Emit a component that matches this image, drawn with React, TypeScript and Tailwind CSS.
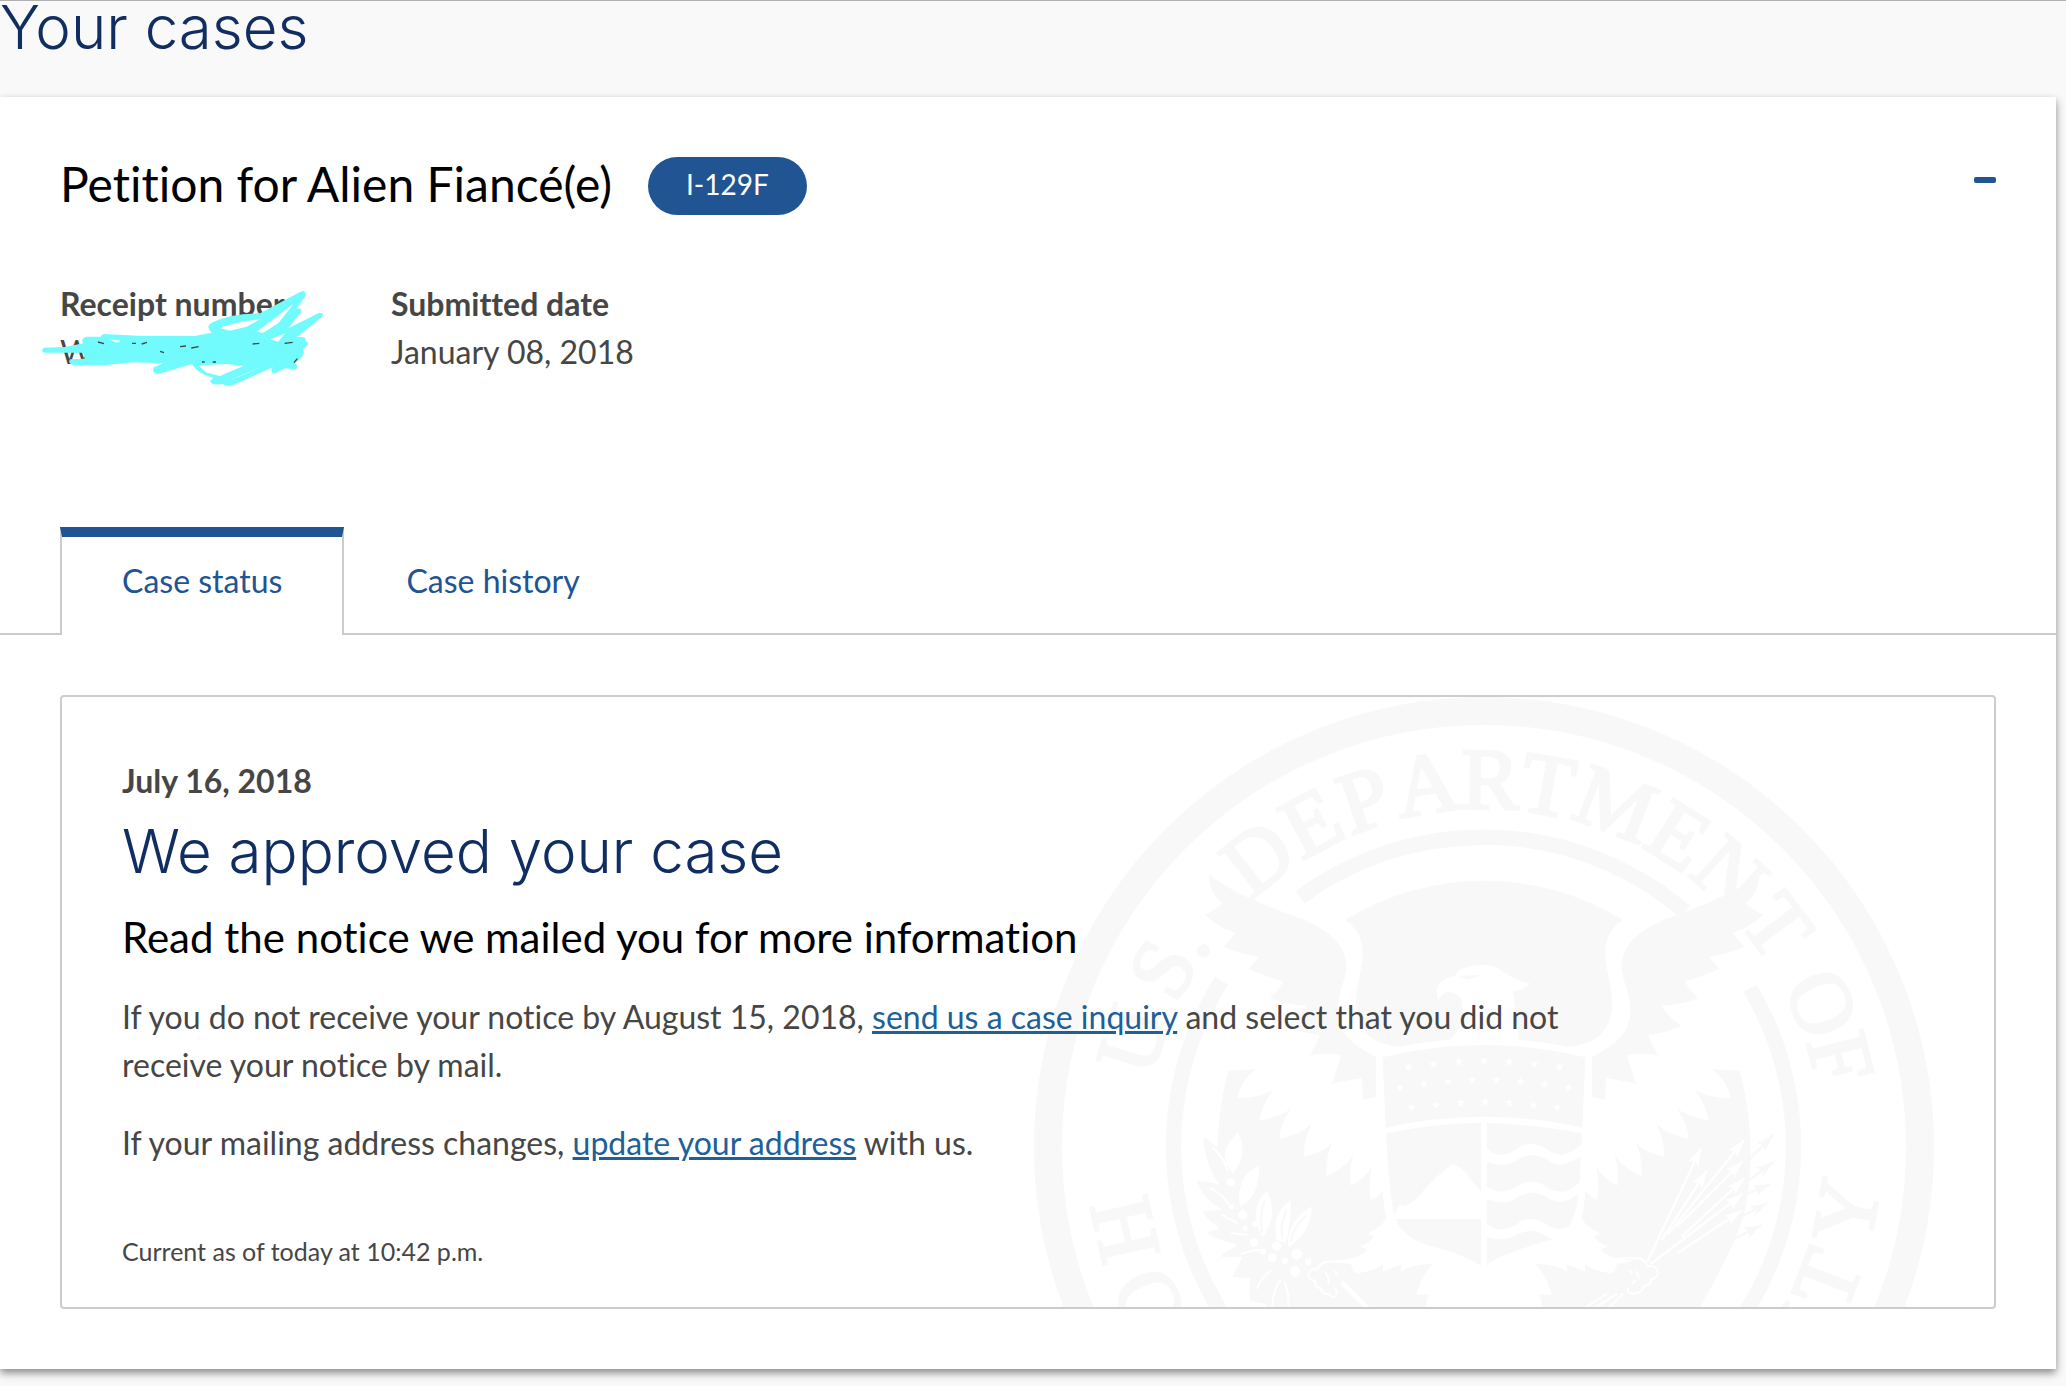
import { useState } from "react";

const SEAL = "#f8f8f8";

// glyph, degrees clockwise from the top of the seal
const topLetters: [string, number][] = [
  ["U", -73],
  ["S", -61],
  [".", -55],
  ["D", -38],
  ["E", -28],
  ["P", -19],
  ["A", -9],
  ["R", 1],
  ["T", 10],
  ["M", 21],
  ["E", 32],
  ["N", 42],
  ["T", 53],
  ["O", 67],
  ["F", 76],
];

// glyph, degrees clockwise from the bottom of the seal
const bottomLetters: [string, number][] = [
  ["H", 77],
  ["O", 65],
  ["M", 52],
  ["I", -61],
  ["T", -69],
  ["Y", -80],
];

const stars: [number, number][] = [
  [1165, 1130], [1240, 1122], [1316, 1115], [1392, 1112], [1467, 1115], [1543, 1122], [1618, 1130],
  [1140, 1192], [1212, 1182], [1284, 1174], [1357, 1170], [1430, 1170], [1502, 1174], [1574, 1182], [1645, 1192],
  [1175, 1252], [1248, 1245], [1322, 1238], [1395, 1235], [1468, 1238], [1540, 1245], [1612, 1252],
];

const berries: [number, number, number][] = [
  [632, 1477, 12], [635, 1550, 8], [668, 1575, 14], [676, 1615, 8], [705, 1602, 8],
  [702, 1657, 13], [730, 1685, 9], [757, 1703, 13], [770, 1668, 14], [795, 1712, 9],
  [830, 1693, 16], [865, 1715, 10], [825, 1744, 16],
];

// tail x, tail y, tip x, tip y
const lightArrows: [number, number, number, number][] = [
  [1882, 1715, 2043, 1375],
  [1925, 1650, 2061, 1442],
  [1945, 1632, 2172, 1350],
  [1970, 1610, 2168, 1414],
  [1985, 1640, 2172, 1466],
  [1892, 1722, 2168, 1512],
  [1972, 1690, 2164, 1562],
];

const darkArrows: [number, number, number, number][] = [
  [2188, 1408, 2260, 1335],
  [2186, 1472, 2260, 1415],
  [2180, 1512, 2252, 1482],
  [2160, 1582, 2242, 1540],
  [2145, 1645, 2225, 1606],
];

const Arrow = ({ points, color }: { points: [number, number, number, number]; color: string }) => {
  const [x1, y1, x2, y2] = points;
  const angle = (Math.atan2(y2 - y1, x2 - x1) * 180) / Math.PI;
  return (
    <g>
      <line x1={x1} y1={y1} x2={x2} y2={y2} stroke={color} strokeWidth={7} />
      <path
        d="M0 0 L-52 -17 L-42 0 L-52 17 Z"
        fill={color}
        transform={`translate(${x2} ${y2}) rotate(${angle})`}
      />
    </g>
  );
};

const UpperWing = () => (
  <path d="M568 553 C620 600 720 640 800 670 C900 705 975 745 980 830 C978 870 955 900 953 960 C953 1020 985 1060 1068 1100 L1068 1220 L1030 1230 L1025 1165 Q985 1170 935 1182 Q955 1130 962 1095 Q915 1088 870 1095 Q890 1065 900 1035 Q850 1030 799 1008 Q835 985 860 947 Q790 945 750 925 Q775 900 790 875 Q740 860 685 837 Q705 815 715 800 Q650 790 610 770 Q635 745 645 728 Q590 710 555 675 Q590 655 608 640 Q565 610 568 553Z" />
);

const LowerWing = () => (
  <path d="M625 1142 L710 1138 Q660 1170 653 1225 Q720 1225 762 1198 Q725 1240 718 1292 Q780 1280 815 1255 Q780 1300 778 1346 Q840 1335 875 1302 Q850 1350 852 1400 Q905 1390 935 1360 Q915 1410 920 1458 Q975 1435 1000 1395 Q985 1440 992 1487 Q1035 1465 1055 1430 Q1045 1480 1052 1530 Q1075 1520 1088 1500 Q1090 1550 1100 1585 Q1080 1615 1045 1630 L1062 1640 Q1040 1665 1020 1668 L1042 1680 Q1010 1710 940 1712 L992 1722 Q1000 1745 1010 1750 Q1060 1745 1090 1722 L1088 1745 L1145 1722 L1142 1745 Q1180 1720 1238 1722 Q1200 1760 1190 1815 L1225 1812 L1215 1860 L749 1860 Q634 1660 609 1560 C580 1420 590 1280 625 1142Z" />
);

const Seal = ({ className }: { className?: string }) => (
  <svg className={className} viewBox="42 21 2700 2700" fill={SEAL} aria-hidden="true">
    <circle cx={1392} cy={1371} r={1308} fill="none" stroke={SEAL} strokeWidth={84} />
    <g
      fontFamily="'Liberation Serif', serif"
      fontSize={262}
      textAnchor="middle"
      stroke={SEAL}
      strokeWidth={9}
    >
      {topLetters.map(([glyph, deg], i) => (
        <text key={i} x={1392} y={356} transform={`rotate(${deg} 1392 1371)`}>
          {glyph}
        </text>
      ))}
      {bottomLetters.map(([glyph, deg], i) => (
        <text key={i} x={1392} y={2562} transform={`rotate(${deg} 1392 1371)`}>
          {glyph}
        </text>
      ))}
    </g>

    <g fill="none" stroke={SEAL} strokeWidth={46}>
      <path d="M840 622 A930 930 0 0 1 1995 665" />
      <path d="M2190 895 A930 930 0 1 1 605 872" />
    </g>

    {/* sky behind the eagle */}
    <path d="M975 690 A798 798 0 0 1 1809 690 C1764 720 1754 760 1756 800 C1764 870 1779 900 1776 950 C1776 1000 1744 1065 1644 1070 Q1392 1020 1140 1070 C1040 1065 1008 1000 1008 950 C1005 900 1020 870 1028 800 C1030 760 1020 720 975 690Z" />
    <path
      fill="#fff"
      d="M1255 930 C1243 895 1250 868 1305 858 L1312 846 C1330 830 1365 824 1400 825 C1455 832 1465 872 1530 880 Q1508 905 1478 902 C1485 950 1495 1010 1500 1060 L1280 1060 C1312 1030 1335 990 1325 935 C1318 900 1270 895 1255 930Z"
    />
    <path d="M1320 858 L1386 855 Q1358 866 1345 869 Z" />

    <UpperWing />
    <LowerWing />
    <g transform="translate(2784 0) scale(-1 1)">
      <UpperWing />
      <LowerWing />
    </g>

    {/* shield */}
    <path d="M1088 1102 Q1392 1028 1696 1102 L1687 1313 Q1392 1247 1097 1313Z" />
    {stars.map(([x, y]) => (
      <path
        key={`${x}-${y}`}
        fill="#fff"
        transform={`translate(${x} ${y})`}
        d="M0 -13 L3 -4 L13 -4 L5 2 L8 12 L0 6 L-8 12 L-5 2 L-13 -4 L-3 -4Z"
      />
    ))}
    <path d="M1098 1330 Q1240 1300 1384 1298 L1384 1505 L1350 1468 L1340 1450 Q1320 1430 1295 1422 L1275 1440 L1250 1460 Q1210 1500 1190 1525 Q1170 1545 1150 1548 L1138 1545 L1122 1575 Q1105 1480 1098 1330Z" />
    <path d="M1125 1587 L1384 1587 L1384 1727 C1340 1700 1280 1680 1220 1665 C1170 1645 1145 1625 1125 1587Z" />
    <path d="M1400 1298 Q1560 1305 1686 1330 L1685 1362 Q1650 1394 1625 1395 Q1595 1390 1575 1375 Q1555 1362 1533 1362 Q1510 1362 1490 1378 Q1465 1395 1440 1395 Q1415 1390 1400 1376Z" />
    <path d="M1400 1415 Q1430 1425 1450 1424 Q1475 1422 1495 1408 Q1520 1393 1545 1396 Q1570 1400 1590 1415 Q1610 1425 1630 1422 Q1660 1415 1682 1400 L1680 1475 Q1650 1505 1625 1505 Q1595 1503 1575 1488 Q1555 1475 1533 1475 Q1510 1475 1490 1491 Q1465 1505 1440 1505 Q1415 1503 1400 1489Z" />
    <path d="M1400 1528 Q1430 1538 1450 1537 Q1475 1535 1495 1521 Q1520 1506 1545 1509 Q1570 1513 1590 1528 Q1610 1538 1630 1535 Q1655 1528 1675 1513 Q1670 1570 1649 1605 Q1635 1618 1620 1617 Q1595 1616 1575 1601 Q1555 1587 1533 1587 Q1510 1587 1490 1603 Q1465 1619 1440 1619 Q1415 1616 1400 1602Z" />
    <path d="M1400 1641 Q1430 1650 1450 1648 Q1475 1645 1495 1632 Q1530 1615 1560 1630 L1598 1647 Q1450 1690 1400 1725Z" />

    {/* laurel branch */}
    <path d="M740 1860 L738 1842 L690 1833 Q685 1800 692 1765 L637 1760 Q655 1720 670 1700 L602 1700 Q625 1675 660 1665 Q590 1650 560 1628 L600 1615 Q560 1590 548 1563 L610 1560 Q550 1530 530 1473 Q570 1475 600 1485 Q555 1430 550 1340 C600 1370 635 1420 640 1470 L800 1660 L860 1860Z" />
    <g fill="#fff">
      <path d="M655 1327 C680 1390 660 1420 640 1450 C605 1410 605 1370 655 1327Z" />
      <path d="M718 1425 C715 1500 700 1530 660 1548 C650 1490 670 1450 718 1425Z" />
      <path d="M742 1503 C765 1560 760 1600 728 1640 C695 1590 705 1530 742 1503Z" />
      <path d="M812 1530 C770 1560 760 1600 770 1650 L795 1660 Q815 1600 812 1530Z" />
      <path d="M875 1550 C875 1610 840 1650 805 1670 C800 1620 830 1570 875 1550Z" />
      {berries.map(([cx, cy, r]) => (
        <circle key={`${cx}-${cy}`} cx={cx} cy={cy} r={r} />
      ))}
    </g>
    <g fill="none" stroke={SEAL} strokeWidth={6}>
      <path d="M734 1530 Q718 1570 726 1628" />
      <path d="M800 1560 Q780 1600 786 1645" />
      <path d="M860 1575 Q820 1610 812 1655" />
    </g>
    <g fill="none" stroke="#fff" strokeWidth={6} strokeLinecap="round">
      <path d="M580 1375 Q610 1400 624 1442 M570 1495 Q605 1510 625 1540 M605 1575 L650 1598 M635 1630 L680 1634 M665 1692 Q695 1680 722 1680 M755 1740 Q720 1765 712 1795 M782 1770 Q757 1800 757 1855 M795 1780 Q808 1815 805 1855" />
      {/* claws */}
      <path d="M990 1716 L930 1714 Q900 1716 892 1738 Q865 1735 865 1755 Q868 1772 885 1772 Q882 1792 902 1795 Q910 1815 928 1812 Q935 1828 948 1818 Q955 1800 942 1795 M918 1750 Q930 1765 925 1780 M945 1745 L950 1752" />
      <path d="M1794 1706 L1850 1704 Q1876 1708 1884 1728 Q1912 1726 1914 1748 Q1910 1768 1892 1768 Q1895 1785 1872 1788 Q1864 1812 1842 1810 Q1822 1812 1824 1796 M1850 1745 L1856 1764 M1828 1742 L1834 1748 M1838 1780 L1846 1772" />
      <path strokeWidth={14} d="M970 1782 L1044 1856" />
      <path d="M1700 1850 L1760 1812 M1730 1850 L1790 1812 M1770 1850 L1808 1812" />
    </g>

    {lightArrows.map((points, i) => (
      <Arrow key={i} points={points} color="#fff" />
    ))}
    {darkArrows.map((points, i) => (
      <Arrow key={i} points={points} color={SEAL} />
    ))}
  </svg>
);

const Scribble = ({ className }: { className?: string }) => (
  <svg className={className} viewBox="0 0 930 360" fill="#72fbfd" aria-hidden="true">
    <path d="M42 203 L105 201 L160 190 Q150 175 170 170 L212 170 Q215 160 235 163 L340 168 L495 168 L545 158 Q525 140 545 128 Q600 100 690 100 L812 35 Q828 28 827 48 L800 85 Q820 85 812 98 L775 145 L868 98 Q885 98 875 112 L800 172 Q832 168 826 182 Q842 190 828 200 Q815 205 822 218 Q815 238 795 248 Q808 262 796 268 L765 265 L735 280 Q718 280 728 262 L612 314 Q595 322 578 312 Q545 318 540 302 L550 294 Q500 280 486 252 L385 282 Q362 278 372 262 L400 250 L310 247 L230 255 L130 255 Q112 250 120 238 L165 236 L160 218 L42 218 Q30 211 42 203Z" />
    <path
      fill="#fff"
      d="M566 143 L640 124 L690 118 L650 140 L600 152Z M700 158 L680 155 L790 72 L745 130Z M720 178 L765 160 L745 185Z M505 256 L590 252 L640 258 L570 288 L530 278Z M640 285 L700 258 L600 300Z M235 178 L272 182 L262 188Z"
    />
    <path
      fill="none"
      stroke="#464646"
      strokeWidth={4}
      d="M204 186 L222 191 M306 190 L318 190 M335 192 L351 187 M390 214 L402 218 M450 200 L468 198 M484 204 L506 200 M516 246 L524 246 M548 246 L558 246 M668 192 L688 190 M764 190 L788 187 M792 248 L802 236"
    />
  </svg>
);

const tabs = ["Case status", "Case history"];

const App = () => {
  const [open, setOpen] = useState(true);
  const [active, setActive] = useState(tabs[0]);

  return (
    <div className="min-h-screen border-t border-[#b0b0b0] bg-[#f9f9f9] pr-[10px] font-['Lato',sans-serif] text-[32px] leading-[48px] text-[#464646] [font-variant-ligatures:none]">
      <h1 className="font-['Inter',sans-serif] text-[60px] font-light leading-[52px] text-[#112e62]">Your cases</h1>

      <main className="mt-[44px] bg-white pb-[60px] pt-[60px] shadow-[0_4px_8px_rgba(0,0,0,0.45)]">
        <header className="flex items-start px-[60px]">
          <h2 className="text-[48px] leading-[54px] text-black">Petition for Alien Fiancé(e)</h2>
          <span className="ml-[36px] rounded-full bg-[#205493] px-[38px] pb-[4px] text-[28px] leading-[54px] text-white">
            I-129F
          </span>
          <button
            type="button"
            aria-label="Toggle case details"
            aria-expanded={open}
            onClick={() => setOpen(!open)}
            className="ml-auto py-5"
          >
            <span className="block h-[6px] w-[22px] rounded-[2px] bg-[#205493]" />
          </button>
        </header>

        {open && (
          <>
            <dl className="mt-[65px] flex px-[60px]">
              <div className="relative w-[331px]">
                <dt className="font-bold">Receipt number</dt>
                <dd>W</dd>
                <Scribble className="absolute -left-[30px] top-0 w-[310px]" />
              </div>
              <div>
                <dt className="font-bold">Submitted date</dt>
                <dd>January 08, 2018</dd>
              </div>
            </dl>

            <div role="tablist" className="mt-[151px] flex text-[#205493]">
              <div className="w-[60px] border-b-2 border-[#ccc]" />
              {tabs.map((tab) => (
                <button
                  key={tab}
                  type="button"
                  role="tab"
                  aria-selected={tab === active}
                  onClick={() => setActive(tab)}
                  className={
                    tab === active
                      ? "border-x-2 border-t-[10px] border-x-[#ccc] border-t-[#205493] px-[60px] pb-[30px] pt-[20px]"
                      : "border-b-2 border-[#ccc] px-[62px] pb-[28px] pt-[30px]"
                  }
                >
                  {tab}
                </button>
              ))}
              <div className="flex-1 border-b-2 border-[#ccc]" />
            </div>

            <section className="relative mx-[60px] mt-[60px] overflow-hidden rounded border-2 border-[#ccc] px-[60px] pb-[36px] pt-[60px]">
              <Seal className="absolute right-[60px] top-0 w-[900px]" />
              <div className="relative">
                <p className="font-bold">July 16, 2018</p>
                <h2 className="mt-[10px] font-['Inter',sans-serif] text-[60px] font-light leading-[72px] text-[#112e62]">
                  We approved your case
                </h2>
                <h3 className="mt-[26px] text-[42px] text-black">Read the notice we mailed you for more information</h3>
                <p className="mt-[32px] max-w-[1480px]">
                  If you do not receive your notice by August 15, 2018,{" "}
                  <a href="#inquiry" className="text-[#205f97] underline">
                    send us a case inquiry
                  </a>{" "}
                  and select that you did not receive your notice by mail.
                </p>
                <p className="mt-[30px]">
                  If your mailing address changes,{" "}
                  <a href="#address" className="text-[#205f97] underline">
                    update your address
                  </a>{" "}
                  with us.
                </p>
                <p className="mt-[64px] text-[25px] leading-[40px]">Current as of today at 10:42 p.m.</p>
              </div>
            </section>
          </>
        )}
      </main>
    </div>
  );
};

export default App;
